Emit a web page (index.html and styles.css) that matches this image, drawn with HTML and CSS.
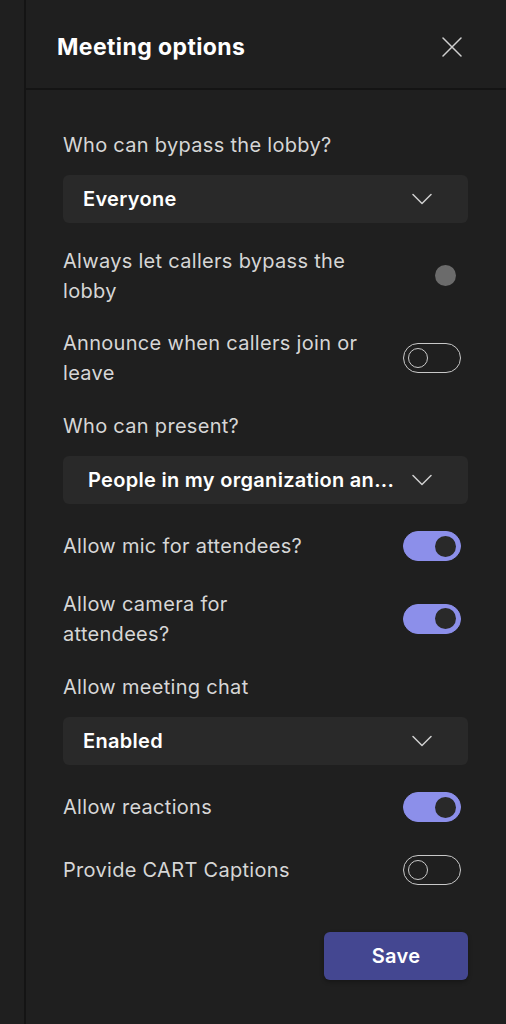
FILE: index.html
```html
<!DOCTYPE html>
<html>
<head>
    <title>Meeting options</title>
    <link rel="stylesheet" href="styles.css">
</head>
<body>
    <div class="rail"></div>

    <div class="panel">
        <div class="panel-header">
            <h1>Meeting options</h1>
            <button class="close-btn" aria-label="Close">
                <svg width="20" height="20" viewBox="0 0 20 20">
                    <path d="M1 1 L19 19 M19 1 L1 19" stroke="#cfcfcf" stroke-width="1.5" fill="none" stroke-linecap="round"/>
                </svg>
            </button>
        </div>

        <div class="panel-body">
            <div class="field">
                <div class="field-label">Who can bypass the lobby?</div>
                <div class="dropdown">
                    <span class="dropdown-value">Everyone</span>
                    <svg class="chevron" width="20" height="12" viewBox="0 0 20 12">
                        <path d="M1 1.5 L10 10.5 L19 1.5" stroke="#cfcfcf" stroke-width="1.5" fill="none" stroke-linecap="round" stroke-linejoin="round"/>
                    </svg>
                </div>
            </div>

            <div class="option">
                <div class="option-label">Always let callers bypass the lobby</div>
                <div class="toggle toggle--disabled"><span class="knob"></span></div>
            </div>

            <div class="option">
                <div class="option-label">Announce when callers join or leave</div>
                <div class="toggle"><span class="knob"></span></div>
            </div>

            <div class="field">
                <div class="field-label">Who can present?</div>
                <div class="dropdown">
                    <span class="dropdown-value dropdown-value--long">People in my organization an...</span>
                    <svg class="chevron" width="20" height="12" viewBox="0 0 20 12">
                        <path d="M1 1.5 L10 10.5 L19 1.5" stroke="#cfcfcf" stroke-width="1.5" fill="none" stroke-linecap="round" stroke-linejoin="round"/>
                    </svg>
                </div>
            </div>

            <div class="option">
                <div class="option-label">Allow mic for attendees?</div>
                <div class="toggle toggle--on"><span class="knob"></span></div>
            </div>

            <div class="option">
                <div class="option-label">Allow camera for<br>attendees?</div>
                <div class="toggle toggle--on"><span class="knob"></span></div>
            </div>

            <div class="field">
                <div class="field-label">Allow meeting chat</div>
                <div class="dropdown">
                    <span class="dropdown-value">Enabled</span>
                    <svg class="chevron" width="20" height="12" viewBox="0 0 20 12">
                        <path d="M1 1.5 L10 10.5 L19 1.5" stroke="#cfcfcf" stroke-width="1.5" fill="none" stroke-linecap="round" stroke-linejoin="round"/>
                    </svg>
                </div>
            </div>

            <div class="option">
                <div class="option-label">Allow reactions</div>
                <div class="toggle toggle--on"><span class="knob"></span></div>
            </div>

            <div class="option">
                <div class="option-label">Provide CART Captions</div>
                <div class="toggle"><span class="knob"></span></div>
            </div>

            <div class="actions">
                <button class="save-btn">Save</button>
            </div>
        </div>
    </div>
</body>
</html>
```

FILE: styles.css
```css
body {
    margin: 0;
    background: #1f1f1f;
    color: #d6d6d6;
    font-family: Inter, "Noto Sans", sans-serif;
    letter-spacing: 0.3px;
    display: flex;
    min-height: 1024px;
}
.rail {
    width: 24px;
    border-right: 2px solid #141414;
    flex-shrink: 0;
}
.panel {
    flex: 1;
}
.panel-header {
    height: 88px;
    border-bottom: 2px solid #141414;
    display: flex;
    align-items: center;
    justify-content: space-between;
    padding: 0 44px 0 31px;
}
.panel-header h1 {
    margin: 0;
    font-size: 23px;
    font-weight: 700;
    letter-spacing: 0.4px;
    color: #ffffff;
    padding-top: 5px;
}
.close-btn {
    background: none;
    border: none;
    padding: 0;
    width: 20px;
    height: 20px;
    cursor: pointer;
    margin-top: 5px;
}
.panel-body {
    padding: 40px 38px 0 37px;
    display: flex;
    flex-direction: column;
    gap: 22.6px;
}
.field-label,
.option-label {
    font-size: 20px;
    line-height: 30px;
}
.field-label {
    margin-bottom: 15px;
}
.dropdown {
    height: 48px;
    background: #292929;
    border-radius: 6px;
    display: flex;
    align-items: center;
    padding: 0 36px 0 20px;
}
.dropdown-value {
    flex: 1;
    font-size: 20px;
    font-weight: 600;
    color: #ffffff;
    white-space: nowrap;
    overflow: hidden;
    text-overflow: ellipsis;
}
.dropdown-value--long {
    padding-left: 5px;
}
.chevron {
    flex-shrink: 0;
    margin-left: 12px;
}
.option {
    min-height: 40px;
    display: flex;
    align-items: center;
    justify-content: space-between;
    padding-right: 7px;
}
.option-label {
    max-width: 300px;
}
.toggle {
    width: 58px;
    height: 30px;
    box-sizing: border-box;
    border: 1.5px solid #c8c8c8;
    border-radius: 15px;
    display: flex;
    align-items: center;
    padding: 0 4px;
    flex-shrink: 0;
}
.knob {
    width: 20px;
    height: 20px;
    box-sizing: border-box;
    border: 1.5px solid #c8c8c8;
    border-radius: 50%;
}
.toggle--on {
    background: #8c8fea;
    border-color: #8c8fea;
    justify-content: flex-end;
}
.toggle--on .knob {
    width: 21px;
    height: 21px;
    background: #292929;
    border: none;
}
.toggle--disabled {
    border-color: transparent;
    justify-content: flex-end;
}
.toggle--disabled .knob {
    width: 21px;
    height: 21px;
    background: #6b6b6b;
    border: none;
}
.actions {
    display: flex;
    justify-content: flex-end;
    margin-top: 20px;
}
.save-btn {
    width: 144px;
    height: 48px;
    background: #444791;
    color: #ffffff;
    border: none;
    border-radius: 6px;
    font-family: Inter, "Noto Sans", sans-serif;
    font-size: 20px;
    font-weight: 600;
    letter-spacing: 0.3px;
    box-shadow: 0 2px 4px rgba(0, 0, 0, 0.3);
    cursor: pointer;
}
```
